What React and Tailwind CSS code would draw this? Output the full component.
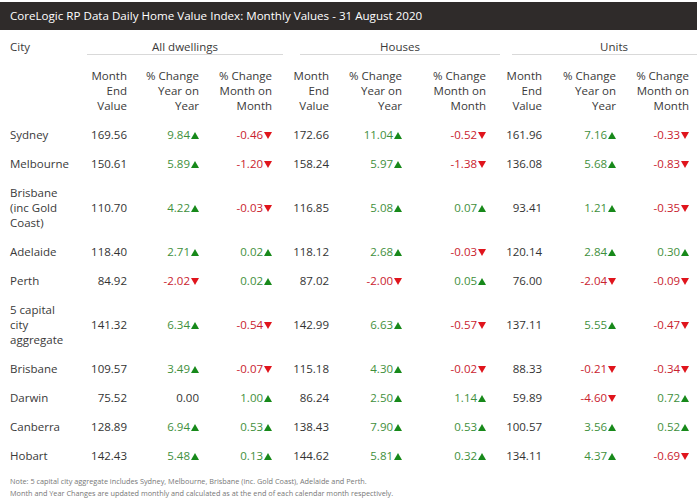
import React from "react";

const rows = [
  ["Sydney", "169.56", "9.84u", "-0.46d", "172.66", "11.04u", "-0.52d", "161.96", "7.16u", "-0.33d"],
  ["Melbourne", "150.61", "5.89u", "-1.20d", "158.24", "5.97u", "-1.38d", "136.08", "5.68u", "-0.83d"],
  ["Brisbane (inc Gold Coast)", "110.70", "4.22u", "-0.03d", "116.85", "5.08u", "0.07u", "93.41", "1.21u", "-0.35d"],
  ["Adelaide", "118.40", "2.71u", "0.02u", "118.12", "2.68u", "-0.03d", "120.14", "2.84u", "0.30u"],
  ["Perth", "84.92", "-2.02d", "0.02u", "87.02", "-2.00d", "0.05u", "76.00", "-2.04d", "-0.09d"],
  ["5 capital city aggregate", "141.32", "6.34u", "-0.54d", "142.99", "6.63u", "-0.57d", "137.11", "5.55u", "-0.47d"],
  ["Brisbane", "109.57", "3.49u", "-0.07d", "115.18", "4.30u", "-0.02d", "88.33", "-0.21d", "-0.34d"],
  ["Darwin", "75.52", "0.00", "1.00u", "86.24", "2.50u", "1.14u", "59.89", "-4.60d", "0.72u"],
  ["Canberra", "128.89", "6.94u", "0.53u", "138.43", "7.90u", "0.53u", "100.57", "3.56u", "0.52u"],
  ["Hobart", "142.43", "5.48u", "0.13u", "144.62", "5.81u", "0.32u", "134.11", "4.37u", "-0.69d"],
];

function Up() {
  return (
    <svg width="8" height="7" viewBox="0 0 8 7" className="inline-block ml-px mb-[1px]">
      <polygon points="4,0 8,7 0,7" fill="#17891a" />
    </svg>
  );
}
function Down() {
  return (
    <svg width="8" height="7" viewBox="0 0 8 7" className="inline-block ml-px mb-[1px]">
      <polygon points="0,0 8,0 4,7" fill="#e0141c" />
    </svg>
  );
}

function Cell({ v }) {
  const last = v[v.length - 1];
  if (last === "u") {
    return (
      <span className="text-[#3f8f3c] whitespace-nowrap">
        {v.slice(0, -1)}
        <Up />
      </span>
    );
  }
  if (last === "d") {
    return (
      <span className="text-[#c9222e] whitespace-nowrap">
        {v.slice(0, -1)}
        <Down />
      </span>
    );
  }
  return <span className="text-[#333]">{v}</span>;
}

const subHeads = [
  "Month End Value",
  "% Change Year on Year",
  "% Change Month on Month",
  "Month End Value",
  "% Change Year on Year",
  "% Change Month on Month",
  "Month End Value",
  "% Change Year on Year",
  "% Change Month on Month",
];

export default function App() {
  return (
    <div
      className="w-[697px] h-[501px] overflow-hidden bg-white text-[#3a3a3a]"
      style={{ fontFamily: '"Open Sans", "Noto Sans", sans-serif' }}
    >
      <div className="pt-[2px]">
        <div className="h-[28px] bg-[#2f2b2a] text-white text-[11.6px] leading-[28px] pl-[10px]">
          CoreLogic RP Data Daily Home Value Index: Monthly Values - 31 August 2020
        </div>
      </div>
      <table className="table-fixed border-collapse w-[697px] text-[11.5px] leading-[15px]">
        <colgroup>
          <col className="w-[80px]" />
          <col className="w-[55px]" />
          <col className="w-[72px]" />
          <col className="w-[73px]" />
          <col className="w-[57px]" />
          <col className="w-[73px]" />
          <col className="w-[84px]" />
          <col className="w-[56px]" />
          <col className="w-[74px]" />
          <col className="w-[73px]" />
        </colgroup>
        <thead>
          <tr>
            <th className="font-normal text-left align-top pl-[10px] pt-[9px] pb-[6px]">City</th>
            <th colSpan={3} className="font-normal align-top pt-[9px] pb-[6px] p-0">
              <div className="ml-[7px] mr-[-3px] border-b border-[#d9d9d9] text-center">All dwellings</div>
            </th>
            <th colSpan={3} className="font-normal align-top pt-[9px] pb-[6px] p-0">
              <div className="ml-[20px] mr-[-6px] border-b border-[#d9d9d9] text-center">Houses</div>
            </th>
            <th colSpan={3} className="font-normal align-top pt-[9px] pb-[6px] p-0">
              <div className="ml-[18px] mr-[-19px] border-b border-[#d9d9d9] text-center">Units</div>
            </th>
          </tr>
          <tr>
            <th className="p-0"></th>
            {subHeads.map((h, i) => (
              <th key={i} className="font-normal text-right pr-[8px] pl-[4px] pt-[7px] pb-[7px] align-middle">
                {h}
              </th>
            ))}
          </tr>
        </thead>
        <tbody>
          {rows.map((r, i) => (
            <tr key={i}>
              <td className="pl-[10px] pr-[6px] py-[7px] align-middle text-[#3a3a3a]">{r[0]}</td>
              {r.slice(1).map((v, j) => (
                <td key={j} className="text-right pr-[8px] pl-[2px] py-[7px] align-middle">
                  <Cell v={v} />
                </td>
              ))}
            </tr>
          ))}
        </tbody>
      </table>
      <div className="pl-[10px] pt-[5px] text-[7.3px] leading-[12px] text-[#777]">
        <div>Note: 5 capital city aggregate includes Sydney, Melbourne, Brisbane (inc. Gold Coast), Adelaide and Perth.</div>
        <div>Month and Year Changes are updated monthly and calculated as at the end of each calendar month respectively.</div>
      </div>
    </div>
  );
}
